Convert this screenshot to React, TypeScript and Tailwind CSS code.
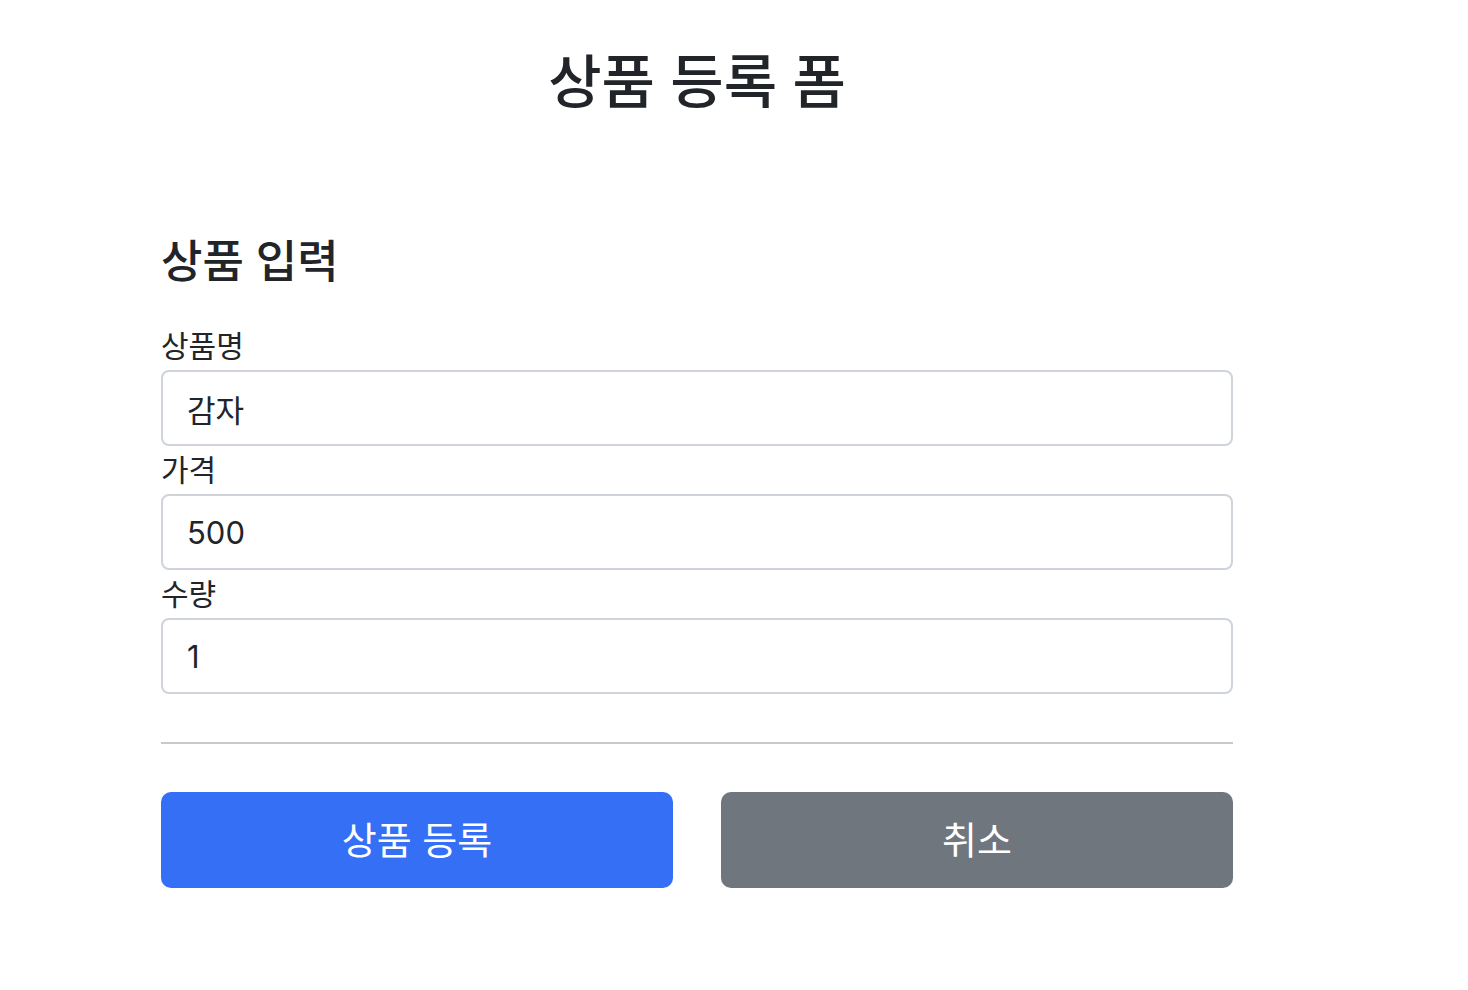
import React from "react";

const fields = [
  { label: "상품명", value: "감자" },
  { label: "가격", value: "500" },
  { label: "수량", value: "1" },
];

export default function App() {
  return (
    <div className="min-h-[990px] bg-white">
      <div className="ml-[137px] w-[1120px] px-[24px] font-['Inter','Noto_Sans_CJK_KR',sans-serif] text-[#212529]">
        <div className="pt-[47px] text-center">
          <h2 className="text-[58px] font-medium leading-[70px]">상품 등록 폼</h2>
        </div>
        <h4 className="mt-[118px] text-[45px] font-medium leading-[54px]">상품 입력</h4>
        <form className="mt-[33px]">
          {fields.map((f) => (
            <div key={f.label}>
              <label className="block h-[48px] text-[30px] leading-[48px]">{f.label}</label>
              <input
                readOnly
                value={f.value}
                className="block h-[76px] w-full rounded-[8px] border-2 border-[#ced4da] bg-white px-[24px] font-['Inter','Noto_Sans_CJK_KR',sans-serif] text-[31px] text-[#212529] outline-none"
              />
            </div>
          ))}
          <hr className="mt-[48px] border-0 border-t-2 border-[#c8c9ca]" />
          <div className="mt-[48px] grid grid-cols-2 gap-[48px]">
            <button
              type="button"
              className="h-[96px] rounded-[10px] bg-[#346ff5] text-[38px] text-white"
            >
              상품 등록
            </button>
            <button
              type="button"
              className="h-[96px] rounded-[10px] bg-[#6f767e] text-[38px] text-white"
            >
              취소
            </button>
          </div>
        </form>
      </div>
    </div>
  );
}
